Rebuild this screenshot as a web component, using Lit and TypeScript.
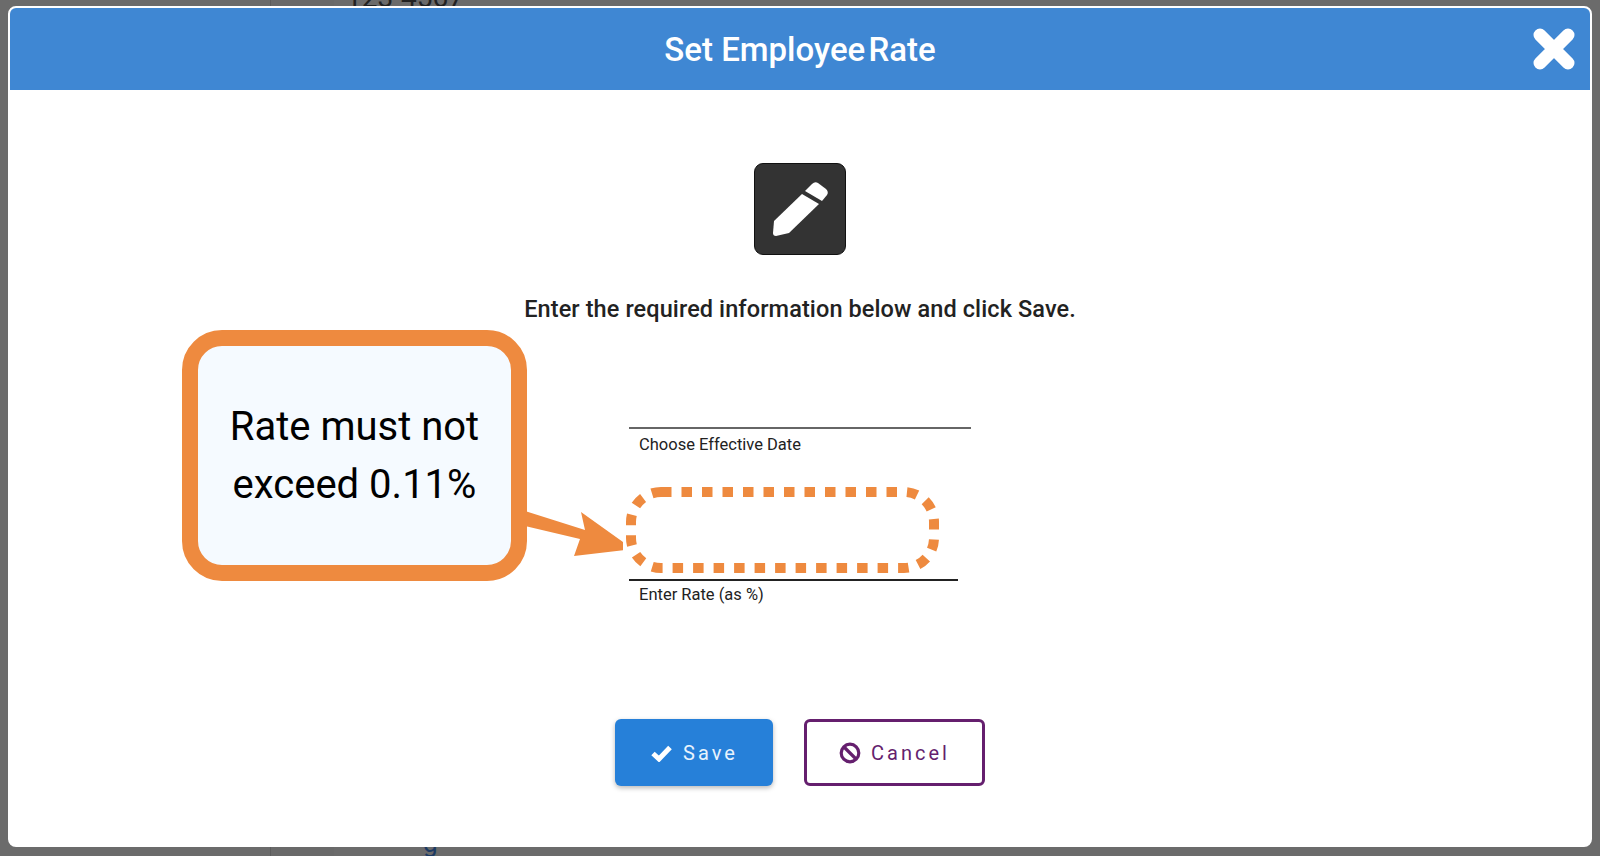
import { LitElement, html, css } from "lit";
import { customElement } from "lit/decorators.js";

@customElement("app-root")
export class AppRoot extends LitElement {
  static styles = css`
    :host {
      display: block;
      height: 856px;
      font-family: Roboto, "Liberation Sans", sans-serif;
    }

    .page {
      position: relative;
      box-sizing: border-box;
      height: 856px;
      padding: 6px 8px 9px;
      background: #6b6b6b;
      overflow: hidden;
    }

    /* page showing behind the dialog */
    .behind {
      position: absolute;
      inset: 0;
    }

    .behind .panel {
      position: absolute;
      top: 0;
      bottom: 0;
      left: 270px;
      width: 63px;
      border-left: 1px solid #5c5c5c;
      background: #696969;
    }

    .behind .phone {
      position: absolute;
      top: -18px;
      left: 346px;
      font-size: 28px;
      line-height: 32px;
      color: #222;
    }

    .behind .tail {
      position: absolute;
      top: 828px;
      left: 423px;
      font-size: 26px;
      line-height: 30px;
      color: #1c3a63;
    }

    .dialog {
      position: relative;
      box-sizing: border-box;
      display: flex;
      flex-direction: column;
      height: 100%;
      border: 2px solid #fff;
      border-radius: 8px;
      background: #fff;
      overflow: hidden;
    }

    .header {
      position: relative;
      flex: none;
      display: flex;
      align-items: center;
      justify-content: center;
      height: 82px;
      background: #3f87d3;
      color: #fff;
      font-size: 33px;
      font-weight: 500;
    }

    .title .narrow {
      word-spacing: -5px;
    }

    .close {
      position: absolute;
      top: 20px;
      right: 15px;
      width: 42px;
      height: 42px;
    }

    .body {
      display: flex;
      flex-direction: column;
      align-items: center;
      padding-top: 73px;
    }

    .icon-box {
      box-sizing: border-box;
      width: 92px;
      height: 92px;
      border: 1px solid #111;
      border-radius: 9px;
      background: #333;
    }

    .icon-box svg {
      display: block;
      margin: -1px;
    }

    .lead {
      margin-top: 40px;
      font-size: 23.5px;
      line-height: 28px;
      font-weight: 500;
      color: #222;
      letter-spacing: 0.1px;
    }

    .form-row {
      align-self: flex-start;
      display: flex;
      align-items: flex-start;
      margin: 7px 0 0 172px;
    }

    .callout {
      position: relative;
      box-sizing: border-box;
      display: flex;
      flex-direction: column;
      align-items: center;
      justify-content: center;
      width: 345px;
      height: 251px;
      border: 16px solid #ee8a3f;
      border-radius: 40px;
      background: #f5faff;
      color: #000;
      font-size: 40px;
      line-height: 58px;
    }

    .arrow {
      position: absolute;
      top: 160px;
      left: 325px;
      width: 100px;
      height: 64px;
    }

    .fields {
      display: flex;
      flex-direction: column;
      margin: 97px 0 0 102px;
    }

    .field {
      position: relative;
      border-top: 2px solid #666;
      width: 342px;
      height: 56px;
      box-sizing: border-box;
    }

    .field.rate {
      width: 329px;
      height: 40px;
      margin-top: 96px;
      border-top-color: #222;
    }

    .field label {
      display: block;
      margin: 6px 0 0 10px;
      font-size: 16.5px;
      line-height: 20px;
      color: #222;
    }

    .field.rate label {
      margin-top: 4px;
    }

    .dashed {
      position: absolute;
      top: -94px;
      left: -3px;
      width: 313px;
      height: 86px;
    }

    .actions {
      display: flex;
      gap: 31px;
      margin-top: 100px;
    }

    .btn {
      box-sizing: border-box;
      display: flex;
      align-items: center;
      justify-content: center;
      gap: 10px;
      height: 67px;
      border-radius: 6px;
      font-family: inherit;
      font-size: 20px;
      letter-spacing: 3px;
    }

    .btn.save {
      width: 158px;
      border: none;
      background: #2680d9;
      color: #e8f3fd;
      box-shadow: 0 2px 5px rgba(0, 0, 0, 0.28);
    }

    .btn.cancel {
      width: 181px;
      border: 3px solid #651f6e;
      background: #fff;
      color: #651f6e;
    }
  `;

  render() {
    return html`
      <div class="page">
        <div class="behind">
          <div class="panel"></div>
          <div class="phone">123-4567</div>
          <div class="tail">g</div>
        </div>
        <div class="dialog">
          <div class="header">
            <div class="title">Set <span class="narrow">Employee Rate</span></div>
            <svg class="close" viewBox="0 0 42 42">
              <path d="M7 7 35 35M35 7 7 35" stroke="#fff" stroke-width="13" stroke-linecap="round" fill="none" />
            </svg>
          </div>
          <div class="body">
            <div class="icon-box">
              <svg width="92" height="92" viewBox="0 0 92 92">
                <path d="M48 31 65 41 35 70 22 73Q19 73 19 70L20 58Z" fill="#fff" />
                <path d="M51 28 58 21Q61 18 64 20L72 26Q75 29 73 32L68 38Z" fill="#fff" />
              </svg>
            </div>
            <div class="lead">Enter the required information below and click Save.</div>
            <div class="form-row">
              <div class="callout">
                <div>Rate must not</div>
                <div>exceed 0.11%</div>
                <svg class="arrow" viewBox="0 0 100 64">
                  <path d="M2 5 62 24 58 6 110 43 51 50 57 33 2 20Z" fill="#ee8a3f" />
                </svg>
              </div>
              <div class="fields">
                <div class="field">
                  <label>Choose Effective Date</label>
                </div>
                <div class="field rate">
                  <svg class="dashed" viewBox="0 0 313 86">
                    <rect x="5" y="5" width="303" height="76" rx="30" fill="none" stroke="#ee8a3f" stroke-width="10" stroke-dasharray="10.5 10" />
                  </svg>
                  <label>Enter Rate (as %)</label>
                </div>
              </div>
            </div>
            <div class="actions">
              <button class="btn save">
                <svg width="23" height="18" viewBox="0 0 23 18">
                  <path d="M3 9.5 9 15 20 3.5" stroke="#fff" stroke-width="5" fill="none" stroke-linejoin="miter" />
                </svg>
                Save
              </button>
              <button class="btn cancel">
                <svg width="22" height="22" viewBox="0 0 22 22">
                  <circle cx="11" cy="11" r="8.8" stroke="#651f6e" stroke-width="3.2" fill="none" />
                  <path d="M5 5 17 17" stroke="#651f6e" stroke-width="3.2" />
                </svg>
                Cancel
              </button>
            </div>
          </div>
        </div>
      </div>
    `;
  }
}
